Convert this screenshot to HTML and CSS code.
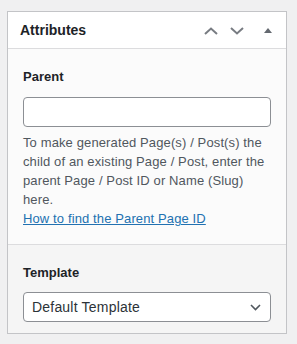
FILE: index.html
```html
<!DOCTYPE html>
<html lang="en">
<head>
    <meta charset="UTF-8">
    <meta name="viewport" content="width=device-width, initial-scale=1.0">
    <title>Attributes</title>
    <link rel="stylesheet" href="styles.css">
</head>
<body>
    <div class="postbox">
        <div class="postbox-header">
            <h2 class="postbox-title">Attributes</h2>
            <div class="handle-actions">
                <button class="handle-btn narrow" aria-label="Move up">
                    <svg width="14" height="8" viewBox="0 0 14 8"><polyline points="1,7 7,1.5 13,7" fill="none" stroke="#787c82" stroke-width="2"/></svg>
                </button>
                <button class="handle-btn narrow" aria-label="Move down">
                    <svg width="14" height="8" viewBox="0 0 14 8"><polyline points="1,1 7,6.5 13,1" fill="none" stroke="#787c82" stroke-width="2"/></svg>
                </button>
                <button class="handle-btn wide" aria-label="Toggle panel">
                    <svg width="8" height="5" viewBox="0 0 8 5"><polygon points="0,5 4,0 8,5" fill="#646970"/></svg>
                </button>
            </div>
        </div>

        <!-- Parent field -->
        <div class="field first">
            <label class="field-label" for="parent">Parent</label>
            <input class="text-input" id="parent" type="text">
            <p class="help">To make generated Page(s) / Post(s) the child of an existing Page / Post, enter the parent Page / Post ID or Name (Slug) here.<br><a href="#">How to find the Parent Page ID</a></p>
        </div>

        <!-- Template field -->
        <div class="field second">
            <label class="field-label" for="template">Template</label>
            <div class="select">
                <span>Default Template</span>
                <svg width="11" height="7" viewBox="0 0 11 7"><polyline points="1,1 5.5,5.5 10,1" fill="none" stroke="#50575e" stroke-width="1.6"/></svg>
            </div>
        </div>
    </div>
</body>
</html>
```

FILE: styles.css
```css
body {
    margin: 0;
    padding: 11px 0 0 7px;
    background-color: #f0f0f1;
    font-family: "Liberation Sans", Arial, sans-serif;
    color: #1d2327;
}
.postbox {
    width: 278px;
    border: 1px solid #c3c4c7;
    background-color: #fff;
}
.postbox-header {
    display: flex;
    align-items: center;
    justify-content: space-between;
    height: 36px;
    border-bottom: 1px solid #dcdcde;
}
.postbox-title {
    margin: 0;
    padding-left: 12px;
    font-size: 14px;
    font-weight: bold;
    line-height: 1.4;
    padding-top: 2px;
}
.handle-actions {
    display: flex;
    height: 36px;
}
.handle-btn {
    display: flex;
    align-items: center;
    justify-content: center;
    padding: 0;
    border: none;
    background: none;
    cursor: pointer;
    padding-top: 1px;
}
.handle-btn.narrow {
    width: 26px;
}
.handle-btn.wide {
    width: 36px;
}
.field {
    padding: 19px 15px 16px;
}
.field.first {
    background-color: #fbfbfb;
    border-bottom: 1px solid #dcdcde;
}
.field.second {
    background-color: #f5f5f5;
    padding-bottom: 11px;
}
.field-label {
    display: block;
    font-size: 13px;
    font-weight: bold;
    line-height: 18px;
    color: #1d2327;
}
.text-input {
    display: block;
    box-sizing: border-box;
    width: 100%;
    height: 30px;
    margin: 11px 0 0;
    border: 1px solid #8c8f94;
    border-radius: 4px;
    background-color: #fff;
}
.help {
    margin: 6px 0 0;
    font-size: 13px;
    line-height: 19px;
    letter-spacing: 0.12px;
    color: #50575e;
}
.help a {
    color: #2271b1;
    text-decoration: underline;
}
.select {
    display: flex;
    align-items: center;
    justify-content: space-between;
    box-sizing: border-box;
    height: 30px;
    margin-top: 10px;
    padding: 0 9px 0 8px;
    border: 1px solid #8c8f94;
    border-radius: 4px;
    background-color: #fff;
    font-size: 14px;
    letter-spacing: 0.2px;
    color: #2c3338;
}
```
